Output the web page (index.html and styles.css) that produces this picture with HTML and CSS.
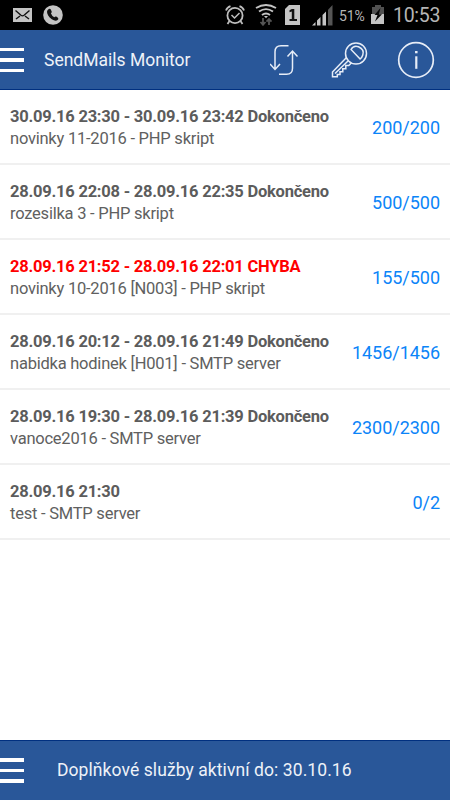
FILE: index.html
```html
<!DOCTYPE html>
<html lang="cs">
<head>
<meta charset="utf-8">
<title>SendMails Monitor</title>
<link rel="stylesheet" href="styles.css">
</head>
<body>
<div class="status">
  <svg class="mail" width="20" height="14" viewBox="0 0 20 14"><path fill="#c4c4c4" d="M0 0h19v14H0z"/><path fill="none" stroke="#111" stroke-width="1.4" d="M2.500 2.500 8 7.300q1.500 1.200 3 0l5.500-4.800M3 11l4-3M16 11l-4-3"/></svg>
  <svg class="call" width="20" height="20" viewBox="0 0 20 20"><circle cx="10" cy="10" r="9.800" fill="#c4c4c4"/><path fill="#111" d="M5.200 4.500q1.500-1.500 2.600.1l.9 2q.3.900-.8 1.700.9 2.700 3.400 4 1-1.200 2-.7l1.600 1.100q1.200 1.100-.3 2.400-2.100 1.700-5.800-.8-4.800-3.900-4.800-7.600.1-1.300 1.200-2.200z"/></svg>
  <span class="spacer"></span>
  <svg class="alarm" width="20" height="20" viewBox="0 0 20 20"><g fill="none" stroke="#bdbdbd" stroke-width="1.800"><circle cx="10" cy="10.500" r="7.600"/><path d="m6.500 10 3 3 5-5" stroke-width="1.500"/><path d="M1 5.500q1-3 4.500-4.300M14.500 1.200Q18 2.500 19 5.500M4.500 16l-2 3M15.500 16l2 3"/></g></svg>
  <svg class="wifi" width="22" height="22" viewBox="0 0 22 22"><g fill="none" stroke="#c4c4c4" stroke-width="1.900"><path d="M1 4q10-6 20 0M4 7.600q7-5 14 0M7 11q4-3.200 8 0"/></g><path d="M9 12h4l-2 2.200z" fill="#c4c4c4"/><path fill="none" stroke="#555" stroke-width="1.800" d="M8 14v7M5.500 18 8 20.800l2.500-2.800M14 21v-6M11.500 17.700 14 15l2.500 2.700"/></svg>
  <svg class="sim" width="16" height="20" viewBox="0 0 16 20"><path fill="#c4c4c4" d="M4 0h11v20H0V4z"/><path fill="#111" d="M6.800 4h2.500v10H12v2H4.500v-2h2.300V6.500L4.500 7.300V5.200z"/></svg>
  <svg class="signal" width="21" height="21" viewBox="0 0 21 21"><path fill="#c4c4c4" d="M0 20.500 3.500 17v3.500zM5 15.500 8.500 12v8.500H5zM10.500 10 14 6.500v14h-3.500z"/><path fill="#555" d="M16 4.800 20.500 0v20.500H16z"/></svg>
  <span class="percent">51%</span>
  <svg class="battery" width="14" height="19" viewBox="0 0 14 19"><path fill="#505050" d="M4 0h6v2h3v8H1V2h3z"/><path fill="#c4c4c4" d="M0 9h13v10H0z"/><path fill="#050505" d="M9.500 3 3.500 10h3L4 16.500l7-7.300H7.800z"/></svg>
  <span class="clock">10:53</span>
</div>
<header class="bar">
  <div class="menu"><i></i><i></i><i></i></div>
  <h1 class="title">SendMails Monitor</h1>
  <svg class="actions" width="180" height="59" viewBox="0 0 180 59"><g fill="none" stroke="#e7edf7" stroke-width="1.500">
    <path d="M18.500 15.700H11q-6 0-6 6v17M0 34l5 5.500 5-5.500M9 44.200h7.500q6 0 6-6V21.500M17.500 26.500l5-5.500 5 5.500"/>
    <circle cx="86" cy="23.500" r="10.500"/>
    <path d="M81 19.500q2.500-4.500 7.500-2.800 6.200 2.800 4.300 8.300-.8 2.600-2.700 4z"/>
    <path d="M76.500 27.500 62.500 42v4.800h4.800v-2.300h2.700v-2.800h2.800v-3h3v-3.200h3l2.500-2.500M65 43.500 78 31"/>
    <circle cx="146" cy="30" r="17.300" stroke-width="1.700"/>
    <path d="M146.300 26.300v12.500" stroke-width="2.200"/><path d="M146.300 21v2.300" stroke-width="2.500"/>
  </g></svg>
</header>
<main class="list">
  <section class="row"><div class="info"><b>30.09.16 23:30 - 30.09.16 23:42 Dokončeno</b><p>novinky 11-2016 - PHP skript</p></div><span class="count">200/200</span></section>
  <section class="row"><div class="info"><b>28.09.16 22:08 - 28.09.16 22:35 Dokončeno</b><p>rozesilka 3 - PHP skript</p></div><span class="count">500/500</span></section>
  <section class="row error"><div class="info"><b>28.09.16 21:52 - 28.09.16 22:01 CHYBA</b><p>novinky 10-2016 [N003] - PHP skript</p></div><span class="count">155/500</span></section>
  <section class="row"><div class="info"><b>28.09.16 20:12 - 28.09.16 21:49 Dokončeno</b><p>nabidka hodinek [H001] - SMTP server</p></div><span class="count">1456/1456</span></section>
  <section class="row"><div class="info"><b>28.09.16 19:30 - 28.09.16 21:39 Dokončeno</b><p>vanoce2016 - SMTP server</p></div><span class="count">2300/2300</span></section>
  <section class="row"><div class="info"><b>28.09.16 21:30</b><p>test - SMTP server</p></div><span class="count">0/2</span></section>
</main>
<footer class="bar bottom">
  <div class="menu"><i></i><i></i><i></i></div>
  <span class="note">Doplňkové služby aktivní do: 30.10.16</span>
</footer>
</body>
</html>
```
FILE: styles.css
```css
* { box-sizing: border-box; }
body {
  margin: 0;
  height: 800px;
  display: flex;
  flex-direction: column;
  overflow: hidden;
  background: #fff;
  font-family: Roboto, "Liberation Sans", sans-serif;
  color: #5c5c5c;
}
svg { display: block; flex: none; }
.status {
  height: 30px;
  flex: none;
  display: flex;
  align-items: center;
  background: #000;
  color: #b5b5b5;
}
.mail { margin-left: 13px; }
.call { margin-left: 10px; }
.spacer { flex: 1; }
.wifi { margin-left: 10px; }
.sim { margin-left: 8px; }
.signal { margin-left: 11px; }
.percent { width: 28px; margin-left: 6px; padding-top: 1px; font-size: 14px; letter-spacing: -0.1px; }
.battery { margin-left: 4px; margin-top: -2px; }
.clock { width: 47px; margin: 0 10px 0 8px; padding-top: 1px; font-size: 19.500px; letter-spacing: -0.3px; }
.bar {
  height: 60px;
  flex: none;
  display: flex;
  align-items: center;
  background: #295799;
  border-bottom: 1px solid #003080;
  color: #eef2f8;
}
.menu { width: 24px; flex: none; display: grid; gap: 7px; padding-top: 1px; }
.menu i { display: block; height: 3.500px; background: #fff; }
.title { margin: 0 0 0 20px; flex: 1; font-size: 17.500px; line-height: 24px; font-weight: 400; white-space: nowrap; }
.list { flex: 1; }
.row {
  height: 75px;
  display: flex;
  align-items: center;
  justify-content: space-between;
  padding: 2px 10px 0;
  border-bottom: 2px solid #f0f0f0;
  white-space: nowrap;
}
.info { font-size: 16.500px; line-height: 23px; letter-spacing: -0.23px; }
.info b { display: block; font-weight: 700; }
.info p { margin: -1px 0 1px; color: #606060; }
.error b { color: #f00; }
.count { color: #0b84f8; font-size: 18px; line-height: 24px; letter-spacing: -0.03px; }
.bottom { border-bottom: 0; border-top: 1px solid #003080; }
.bottom .menu { padding-top: 0; }
.note { margin: -2px 0 0 33px; font-size: 17.500px; line-height: 24px; letter-spacing: 0.08px; }
```
